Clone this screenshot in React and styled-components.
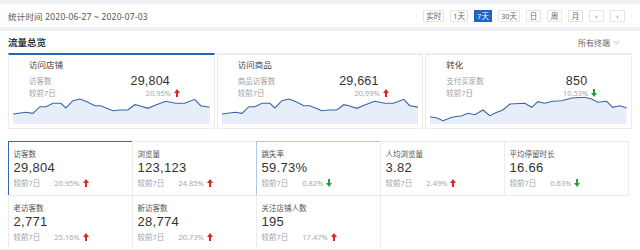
import React from "react";
import styled, { createGlobalStyle } from "styled-components";

const GlobalStyle = createGlobalStyle`
  body {
    margin: 0;
    background: #eff1f4;
    font-family: "Noto Sans", "Noto Sans CJK SC", sans-serif;
    color: #333;
    overflow: hidden;
  }
`;

const lineA = [
  [0, 17], [13, 15.3], [20, 16.3], [27, 9.7], [33, 9.7], [40, 6.3], [48, 6.3],
  [53, 11], [60, 3.7], [67, 2], [73, 4.3], [82, 8.7], [88, 8.7], [100, 13.7],
  [107, 13], [115, 13], [122, 7.7], [127, 8.7], [135, 11.3], [143, 8],
  [153, 4.3], [163, 6.3], [172, 6.3], [182, 2.3], [188, 8.7], [197, 10.3],
];

const lineB = [
  [0, 19.7], [7, 21], [13, 23.7], [22, 20.3], [32, 18.7], [38, 16.3], [45, 17.7],
  [53, 13], [60, 18.7], [67, 15.3], [73, 13], [80, 7], [95, 6.3], [102, 10.3],
  [108, 4.7], [115, 6.3], [123, 4.3], [132, 3.7], [142, 1], [155, 0.3], [162, 2],
  [168, 5.3], [177, 4.3], [183, 10.3], [190, 8.7], [197, 11],
];

const cards = [
  { title: "访问店铺", label: "访客数", value: "29,804", pct: "20.95%", up: true, line: lineA, active: true },
  { title: "访问商品", label: "商品访客数", value: "29,661", pct: "20.99%", up: true, line: lineA },
  { title: "转化", label: "支付买家数", value: "850", pct: "10.53%", up: false, line: lineB },
];

const cells = [
  { label: "访客数", value: "29,804", pct: "20.95%", up: true, tone: "active" },
  { label: "浏览量", value: "123,123", pct: "24.85%", up: true },
  { label: "跳失率", value: "59.73%", pct: "0.82%", up: false, tone: "hover" },
  { label: "人均浏览量", value: "3.82", pct: "2.49%", up: true },
  { label: "平均停留时长", value: "16.66", pct: "0.63%", up: false },
  { label: "老访客数", value: "2,771", pct: "25.16%", up: true },
  { label: "新访客数", value: "28,774", pct: "20.73%", up: true },
  { label: "关注店铺人数", value: "195", pct: "17.47%", up: true },
];

const ranges = ["实时", "1天", "7天", "30天", "日", "周", "月", "‹", "›"];

const TopBar = styled.div`
  margin-top: 4px;
  height: 23px;
  background: #fff;
  display: flex;
  align-items: center;
  justify-content: space-between;
  padding: 0 15px 0 8px;
`;

const DateText = styled.span`
  font-size: 8.5px;
  color: #555;
  letter-spacing: 0.2px;
`;

const RangeGroup = styled.div`
  display: flex;
  gap: 6px;
`;

const RangeButton = styled.span`
  height: 10px;
  min-width: 9px;
  padding: 0 2px;
  display: flex;
  align-items: center;
  justify-content: center;
  font-size: 7.5px;
  border: 1px solid ${(p) => (p.$on ? "#1f63c6" : "#e6e6e6")};
  background: ${(p) => (p.$on ? "#1f63c6" : "#fff")};
  color: ${(p) => (p.$on ? "#fff" : "#666")};
`;

const Panel = styled.div`
  margin-top: 4px;
  background: #fff;
  padding: 0 8px;
`;

const PanelHead = styled.div`
  height: 22px;
  display: flex;
  align-items: center;
  justify-content: space-between;
  padding-right: 12px;
`;

const PanelTitle = styled.span`
  font-size: 9.5px;
  font-weight: 700;
  color: #333;
`;

const Terminal = styled.span`
  font-size: 8px;
  color: #666;
  display: flex;
  align-items: center;
  gap: 3px;
`;

const CardRow = styled.div`
  display: grid;
  grid-template-columns: repeat(3, 1fr);
  gap: 2px;
  width: 624px;
`;

const Card = styled.div`
  height: 76px;
  box-sizing: border-box;
  border: 1px solid #ececec;
  border-top: 2px solid ${(p) => (p.$active ? "#2563b8" : "#ececec")};
  display: flex;
  flex-direction: column;
  padding: 4px;
`;

const CardTitle = styled.div`
  font-size: 8.5px;
  color: #444;
  padding-left: 16px;
  height: 12px;
  line-height: 12px;
`;

const StatLine = styled.div`
  display: flex;
  align-items: center;
  justify-content: space-between;
  width: ${(p) => p.$w}px;
  padding-left: 16px;
  height: ${(p) => p.$h}px;
  line-height: ${(p) => p.$h}px;
  margin-top: ${(p) => p.$mt || 0}px;
`;

const Muted = styled.span`
  font-size: 7.5px;
  color: #a3a3a3;
`;

const CardValue = styled.span`
  font-family: "Liberation Sans", sans-serif;
  font-size: 12.5px;
  color: #333;
  letter-spacing: 0.2px;
`;

const Change = styled.span`
  display: flex;
  align-items: center;
  gap: 3px;
  font-size: 7.5px;
  line-height: 10px;
  color: #a8a8a8;
`;

const Spark = styled.svg`
  display: block;
  width: 100%;
  height: 27px;
  margin-top: -1px;
`;

const Grid = styled.div`
  margin-top: 12px;
  display: grid;
  grid-template-columns: repeat(5, 124px);
  grid-auto-rows: 54px;
`;

const Cell = styled.div`
  box-sizing: border-box;
  border: 1px solid
    ${(p) => (p.$tone === "active" ? "#3567b5" : p.$tone === "hover" ? "#b3c8e6" : "#ececec")};
  margin: -0.5px;
  padding: 8px 5px 0 5px;
  display: flex;
  flex-direction: column;
`;

const CellLabel = styled.span`
  font-size: 7.5px;
  color: #555;
  line-height: 9px;
`;

const CellValue = styled.span`
  font-family: "Liberation Sans", sans-serif;
  font-size: 13px;
  color: #333;
  line-height: 15px;
  margin-top: 1px;
  letter-spacing: 0.3px;
`;

const CellFoot = styled.div`
  display: flex;
  align-items: center;
  margin-top: 3px;
  gap: 14px;
  line-height: 10px;
`;

const Filler = styled.div`
  border-left: 1px solid #ececec;
`;

function Arrow({ up }) {
  const color = up ? "#e0242b" : "#2b9a43";
  return (
    <svg width="6" height="8" viewBox="0 0 6 8">
      <g transform={up ? "" : "rotate(180 3 4)"}>
        <polygon points="3,0 6,4 4,4 4,8 2,8 2,4 0,4" fill={color} />
      </g>
    </svg>
  );
}

function Sparkline({ pts }) {
  const line = pts.map(([x, y], i) => `${i ? "L" : "M"}${x} ${y}`).join(" ");
  const area = `${line} L197 27 L0 27 Z`;
  return (
    <Spark viewBox="0 0 197 27" preserveAspectRatio="none">
      <path d={area} fill="#e7eef9" />
      <path d={line} fill="none" stroke="#3a64a8" strokeWidth="1.1" />
    </Spark>
  );
}

export default function App() {
  return (
    <>
      <GlobalStyle />
      <TopBar>
        <DateText>统计时间 2020-06-27 ~ 2020-07-03</DateText>
        <RangeGroup>
          {ranges.map((r) => (
            <RangeButton key={r} $on={r === "7天"}>
              {r}
            </RangeButton>
          ))}
        </RangeGroup>
      </TopBar>
      <Panel>
        <PanelHead>
          <PanelTitle>流量总览</PanelTitle>
          <Terminal>
            所有终端
            <svg width="7" height="5" viewBox="0 0 7 5">
              <path d="M0.5 0.8 L3.5 3.8 L6.5 0.8" fill="none" stroke="#aaa" strokeWidth="0.8" />
            </svg>
          </Terminal>
        </PanelHead>
        <CardRow>
          {cards.map((c) => (
            <Card key={c.title} $active={c.active}>
              <CardTitle>{c.title}</CardTitle>
              <StatLine $w={141} $h={14} $mt={3}>
                <Muted>{c.label}</Muted>
                <CardValue>{c.value}</CardValue>
              </StatLine>
              <StatLine $w={151} $h={10}>
                <Muted>较前7日</Muted>
                <Change>
                  {c.pct}
                  <Arrow up={c.up} />
                </Change>
              </StatLine>
              <Sparkline pts={c.line} />
            </Card>
          ))}
        </CardRow>
        <Grid>
          {cells.map((c) => (
            <Cell key={c.label} $tone={c.tone}>
              <CellLabel>{c.label}</CellLabel>
              <CellValue>{c.value}</CellValue>
              <CellFoot>
                <Muted>较前7日</Muted>
                <Change>
                  {c.pct}
                  <Arrow up={c.up} />
                </Change>
              </CellFoot>
            </Cell>
          ))}
          <Filler />
        </Grid>
      </Panel>
    </>
  );
}
